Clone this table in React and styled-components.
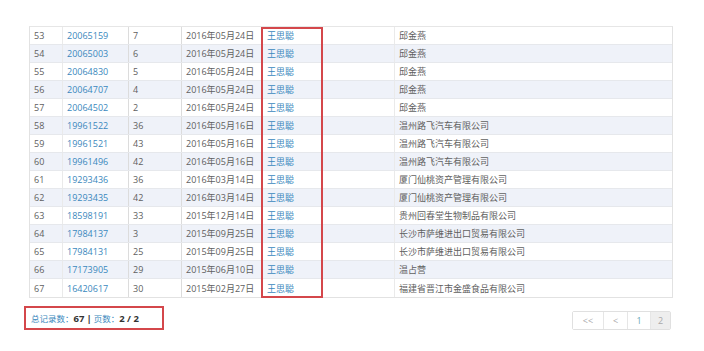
import React from "react";
import styled, { createGlobalStyle } from "styled-components";

const Global = createGlobalStyle`
  html, body { margin: 0; padding: 0; background: #fff; }
  body { font-family: "Open Sans", "Noto Sans CJK SC", sans-serif; }
`;

const rows = [
  [53, "20065159", "7", "2016年05月24日", "王思聪", "邱金燕"],
  [54, "20065003", "6", "2016年05月24日", "王思聪", "邱金燕"],
  [55, "20064830", "5", "2016年05月24日", "王思聪", "邱金燕"],
  [56, "20064707", "4", "2016年05月24日", "王思聪", "邱金燕"],
  [57, "20064502", "2", "2016年05月24日", "王思聪", "邱金燕"],
  [58, "19961522", "36", "2016年05月16日", "王思聪", "温州路飞汽车有限公司"],
  [59, "19961521", "43", "2016年05月16日", "王思聪", "温州路飞汽车有限公司"],
  [60, "19961496", "42", "2016年05月16日", "王思聪", "温州路飞汽车有限公司"],
  [61, "19293436", "36", "2016年03月14日", "王思聪", "厦门仙桃资产管理有限公司"],
  [62, "19293435", "42", "2016年03月14日", "王思聪", "厦门仙桃资产管理有限公司"],
  [63, "18598191", "33", "2015年12月14日", "王思聪", "贵州回春堂生物制品有限公司"],
  [64, "17984137", "3", "2015年09月25日", "王思聪", "长沙市萨维进出口贸易有限公司"],
  [65, "17984131", "25", "2015年09月25日", "王思聪", "长沙市萨维进出口贸易有限公司"],
  [66, "17173905", "29", "2015年06月10日", "王思聪", "温占营"],
  [67, "16420617", "30", "2015年02月27日", "王思聪", "福建省晋江市金盛食品有限公司"],
];

const cols = "32px 66px 53px 81px 132px 1fr";

const Page = styled.div`
  padding-top: 26px;
  width: 704px;
  height: 351px;
  box-sizing: border-box;
`;

const TableWrap = styled.div`
  position: relative;
  margin-left: 29px;
  width: 644px;
  border: 1px solid #e2e2e2;
  border-top-color: #e6e6e6;
  box-sizing: border-box;
`;

const Row = styled.div`
  display: grid;
  grid-template-columns: ${cols};
  height: 18px;
  box-sizing: border-box;
  border-bottom: ${(p) => (p.$last ? "none" : "1px solid #e6e8ec")};
  background: ${(p) => (p.$striped ? "#eff2f9" : "#fff")};
`;

const Cell = styled.div`
  display: flex;
  align-items: center;
  padding-left: 4px;
  font-size: 9px;
  white-space: nowrap;
  color: ${(p) => (p.$link ? "#3a88bd" : "#606060")};
  border-left: ${(p) => (p.$sep ? `1px solid ${p.$faint ? "#eaeaea" : "#dcdcdc"}` : "none")};
`;

const Highlight = styled.div`
  position: absolute;
  left: 231px;
  top: 0;
  width: 62px;
  bottom: -1px;
  border: 2px solid #d4474b;
  box-sizing: border-box;
  pointer-events: none;
`;

const Footer = styled.div`
  margin-left: 24px;
  margin-top: 8px;
  width: 647px;
  display: flex;
  justify-content: space-between;
  align-items: flex-end;
`;

const Summary = styled.div`
  width: 140px;
  height: 24px;
  box-sizing: border-box;
  border: 2px solid #d4474b;
  display: flex;
  align-items: center;
  padding-left: 5px;
  white-space: nowrap;
`;

const Label = styled.span`
  color: #3a88bd;
  font-size: 8.5px;
`;

const Num = styled.span`
  color: #333;
  font-weight: bold;
  font-size: 9.5px;
  margin: ${(p) => (p.$pad ? "0 2px" : "0")};
`;

const Pager = styled.div`
  display: flex;
  height: 19px;
  border: 1px solid #e0e0e0;
  box-sizing: border-box;
  border-radius: 2px;
`;

const PageBtn = styled.div`
  width: ${(p) => p.$w}px;
  display: flex;
  align-items: center;
  justify-content: center;
  font-size: 9px;
  color: ${(p) => (p.$active ? "#aaa" : p.$num ? "#6aa9b8" : "#a8a8a8")};
  background: ${(p) => (p.$active ? "#eeeeee" : "#fff")};
  border-left: ${(p) => (p.$first ? "none" : "1px solid #e6e6e6")};
`;

export default function App() {
  return (
    <Page>
      <Global />
      <TableWrap>
        {rows.map((r, i) => (
          <Row key={r[0]} $striped={r[0] % 2 === 0} $last={i === rows.length - 1}>
            <Cell>{r[0]}</Cell>
            <Cell $link $sep $faint>{r[1]}</Cell>
            <Cell $sep>{r[2]}</Cell>
            <Cell $sep>{r[3]}</Cell>
            <Cell $link $sep>{r[4]}</Cell>
            <Cell $sep $faint>{r[5]}</Cell>
          </Row>
        ))}
        <Highlight />
      </TableWrap>
      <Footer>
        <Summary>
          <Label>总记录数：</Label>
          <Num>67</Num>
          <Num $pad>|</Num>
          <Label>页数：</Label>
          <Num>2 / 2</Num>
        </Summary>
        <Pager>
          <PageBtn $w={30} $first>&lt;&lt;</PageBtn>
          <PageBtn $w={23}>&lt;</PageBtn>
          <PageBtn $w={22} $num>1</PageBtn>
          <PageBtn $w={19} $active>2</PageBtn>
        </Pager>
      </Footer>
    </Page>
  );
}
